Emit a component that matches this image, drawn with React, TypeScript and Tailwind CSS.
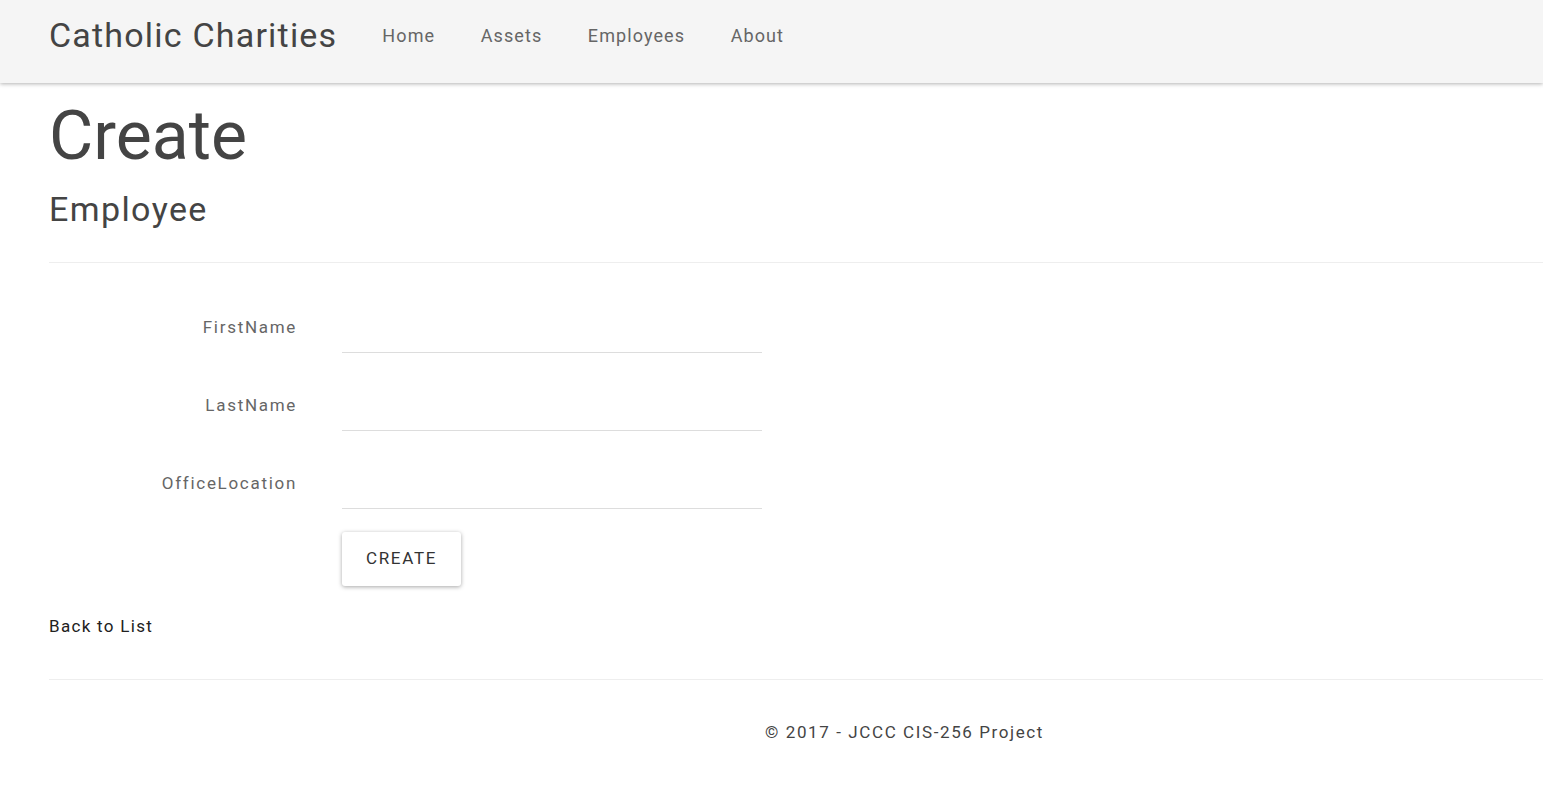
import React from 'react';

const fields = ['FirstName', 'LastName', 'OfficeLocation'];

const App: React.FC = () => {
  return (
    <div className="min-h-[795px] bg-white text-[#444] font-['Roboto',sans-serif]">
      <nav className="h-[83px] bg-[#f5f5f5] shadow-[0_1px_4px_rgba(0,0,0,0.3)] flex items-center pl-[49px]">
        <a className="text-[34px] tracking-[1.2px] text-[#444] mr-[45px] -mt-[12px]">Catholic Charities</a>
        <ul className="flex gap-[45.5px] text-[18px] tracking-[1.1px] text-[#666] -mt-[12px]">
          <li>Home</li>
          <li>Assets</li>
          <li>Employees</li>
          <li>About</li>
        </ul>
      </nav>

      <main className="pl-[49px]">
        <h1 className="text-[68px] leading-none mt-[19px]">Create</h1>
        <h4 className="text-[34px] tracking-[1.4px] leading-none mt-[22px]">Employee</h4>
        <hr className="mt-[36px] border-t border-[#eee]" />

        <form className="mt-[30px] flex flex-col">
          {fields.map((f) => (
            <div key={f} className="flex items-end h-[78px] first:h-[60px]">
              <label className="w-[248px] text-right text-[17px] leading-[24px] tracking-[1.7px] text-[#666] pb-[14px]">
                {f}
              </label>
              <div className="ml-[45px] w-[420px] h-full border-b border-[#ddd]" />
            </div>
          ))}
          <div className="pl-[293px] mt-[23px]">
            <button
              type="button"
              className="w-[119px] h-[54px] bg-white rounded-[3px] shadow-[0_1px_4px_rgba(0,0,0,0.35)] text-[17px] tracking-[1.7px] text-[#333]"
            >
              CREATE
            </button>
          </div>
        </form>

        <a className="block mt-[28px] text-[17px] tracking-[1.3px] text-[#212121]">Back to List</a>
        <hr className="mt-[39px] border-t border-[#eee]" />
        <footer className="pl-[716px] mt-[40px] text-[17px] tracking-[1.6px] text-[#444]">
          © 2017 - JCCC CIS-256 Project
        </footer>
      </main>
    </div>
  );
};

export default App;
